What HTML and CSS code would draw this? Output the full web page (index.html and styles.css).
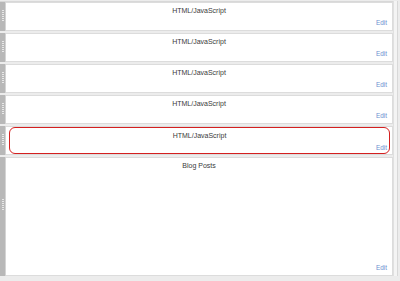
FILE: index.html
```html
<!DOCTYPE html>
<html lang="en">
<head>
  <meta charset="UTF-8">
  <title>Layout</title>
  <link rel="stylesheet" href="styles.css">
</head>
<body>

<div class="layout">
  <div class="column">
    <div class="widget">
      <div class="handle"><span class="grip"></span></div>
      <div class="box">
        <div class="title">HTML/JavaScript</div>
        <a class="edit" href="#">Edit</a>
      </div>
    </div>
    <div class="widget">
      <div class="handle"><span class="grip"></span></div>
      <div class="box">
        <div class="title">HTML/JavaScript</div>
        <a class="edit" href="#">Edit</a>
      </div>
    </div>
    <div class="widget">
      <div class="handle"><span class="grip"></span></div>
      <div class="box">
        <div class="title">HTML/JavaScript</div>
        <a class="edit" href="#">Edit</a>
      </div>
    </div>
    <div class="widget">
      <div class="handle"><span class="grip"></span></div>
      <div class="box">
        <div class="title">HTML/JavaScript</div>
        <a class="edit" href="#">Edit</a>
      </div>
    </div>
    <div class="widget selected">
      <div class="handle"><span class="grip"></span></div>
      <div class="box">
        <div class="inner">
          <div class="title">HTML/JavaScript</div>
          <a class="edit" href="#">Edit</a>
        </div>
      </div>
    </div>
    <div class="widget tall">
      <div class="handle"><span class="grip"></span></div>
      <div class="box">
        <div class="title">Blog Posts</div>
        <a class="edit" href="#">Edit</a>
      </div>
    </div>
  </div>
  <div class="side"></div>
</div>

</body>
</html>
```

FILE: styles.css
```css
body {
  margin: 0;
  padding: 0;
  font-family: 'Liberation Sans', Arial, sans-serif;
  background-color: #ececec;
  height: 281px;
  overflow: hidden;
}

.layout {
  display: flex;
  padding-top: 1px;
}

.column {
  display: flex;
  flex-direction: column;
  gap: 2px;
  width: 393px;
  border-top: 1px solid #d8d8d8;
}

.side {
  flex: 1;
  border-left: 1px solid #e0e0e0;
  border-right: 1px solid #d8d8d8;
  background-color: #f4f4f4;
  margin-right: 2px;
}

/* one widget row */
.widget {
  display: flex;
  height: 29px;
}

.widget.tall {
  height: 119px;
}

.handle {
  width: 6px;
  background-color: #b8b8b8;
  border-right: 1px solid #d4d4d4;
  display: flex;
  justify-content: center;
  padding-top: 8px;
  box-sizing: border-box;
}

.widget.tall .handle {
  padding-top: 42px;
}

.grip {
  width: 2px;
  height: 12px;
  background-image: linear-gradient(#e8e8e8 50%, transparent 50%);
  background-size: 2px 2px;
}

.box {
  flex: 1;
  background-color: #fff;
  border: 1px solid #dcdcdc;
  border-left: none;
  display: flex;
  flex-direction: column;
  padding: 4px 5px 4px;
  box-sizing: border-box;
}

.title {
  text-align: center;
  font-size: 7px;
  color: #3a3a3a;
  flex: 1;
}

.edit {
  align-self: flex-end;
  font-size: 6.4px;
  color: #6d8fcf;
  text-decoration: none;
}

/* selected widget with red outline */
.widget.selected .box {
  padding: 0 2px 0 3px;
}

.widget.selected .inner {
  flex: 1;
  display: flex;
  flex-direction: column;
  border: 1px solid #d42020;
  border-radius: 6px;
  padding: 4px 2px 2px;
}
```
